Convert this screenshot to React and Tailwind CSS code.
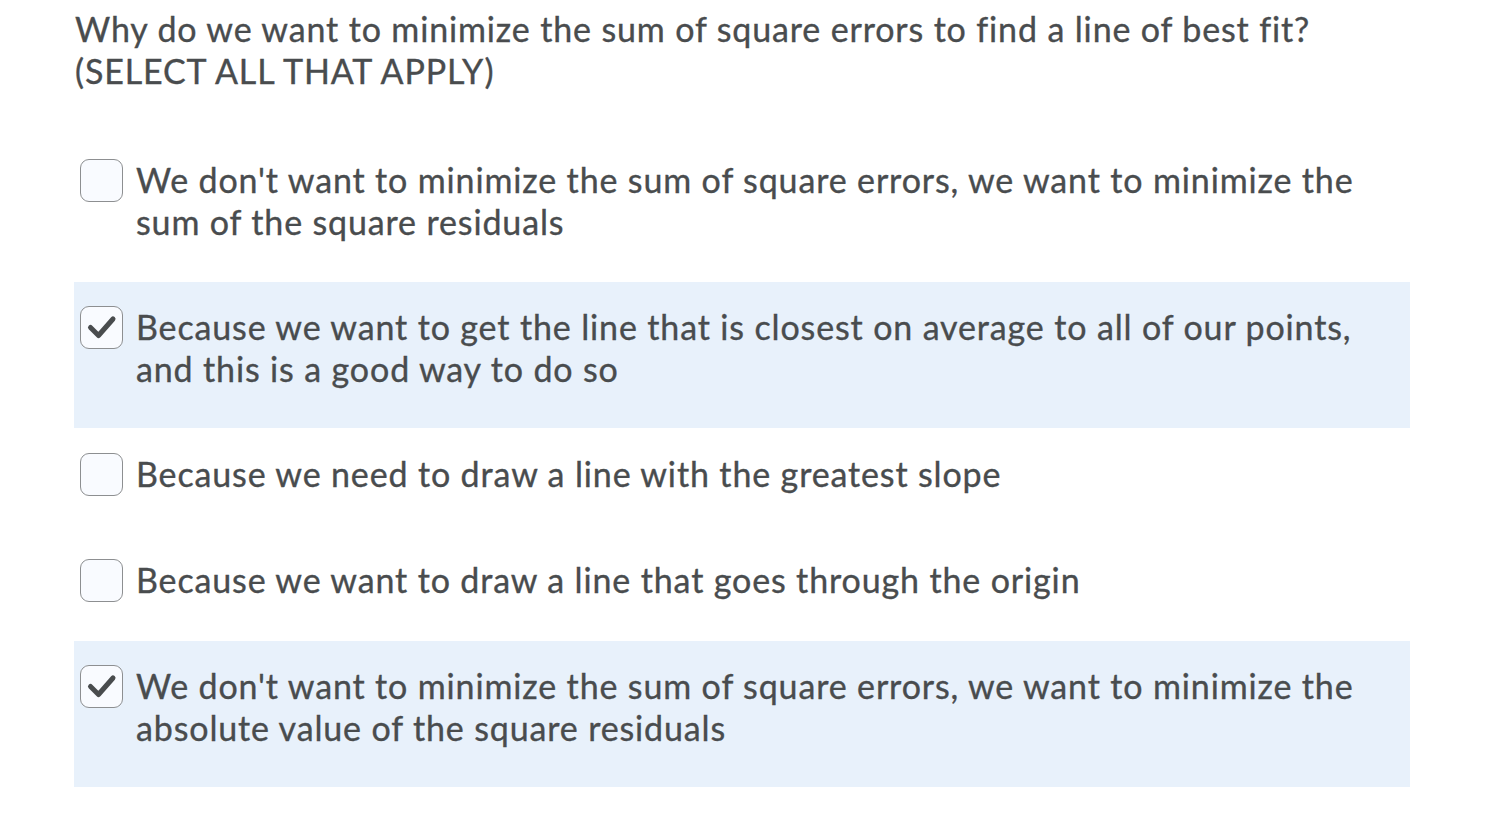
import React from 'react'

const options = [
  { id: 1, lines: ["We don't want to minimize the sum of square errors, we want to minimize the", 'sum of the square residuals'], checked: false },
  { id: 2, lines: ['Because we want to get the line that is closest on average to all of our points,', 'and this is a good way to do so'], checked: true },
  { id: 3, lines: ['Because we need to draw a line with the greatest slope'], checked: false },
  { id: 4, lines: ['Because we want to draw a line that goes through the origin'], checked: false },
  { id: 5, lines: ["We don't want to minimize the sum of square errors, we want to minimize the", 'absolute value of the square residuals'], checked: true },
]

const Check = () => (
  <svg width="43" height="43" viewBox="0 0 43 43" className="absolute inset-[-1.5px]">
    <path d="M10.5 21.5 L18.5 29.5 L33 13" fill="none" stroke="#494c4e" strokeWidth="5" strokeLinecap="round" strokeLinejoin="round" />
  </svg>
)

const App = () => {
  return (
    <div className="w-[1508px] h-[824px] bg-white text-[#494c4e] font-['Lato','Noto_Sans',sans-serif] text-[34px] leading-[42px] tracking-[0.86px] [-webkit-text-stroke:0.35px_#494c4e]">
      <div className="pl-[75px] pt-[8px]">
        <p className="whitespace-nowrap">Why do we want to minimize the sum of square errors to find a line of best fit?</p>
        <p className="whitespace-nowrap">(SELECT ALL THAT APPLY)</p>
      </div>

      <div className="ml-[74px] w-[1336px] mt-[43px] flex flex-col gap-px">
        {options.map((o) => (
          <div key={o.id} className={`flex items-start pl-[6px] pr-[20px] pt-[24px] pb-[38px] ${o.checked ? 'bg-[#e8f1fb]' : ''}`}>
            <div className="relative w-[43px] h-[43px] shrink-0 rounded-[9px] border-[1.5px] border-[#8d8f91] bg-[#f9fbff]">
              {o.checked && <Check />}
            </div>
            <div className="ml-[13px]">
              {o.lines.map((l, i) => (
                <p key={i} className="whitespace-nowrap">{l}</p>
              ))}
            </div>
          </div>
        ))}
      </div>
    </div>
  )
}

export default App
